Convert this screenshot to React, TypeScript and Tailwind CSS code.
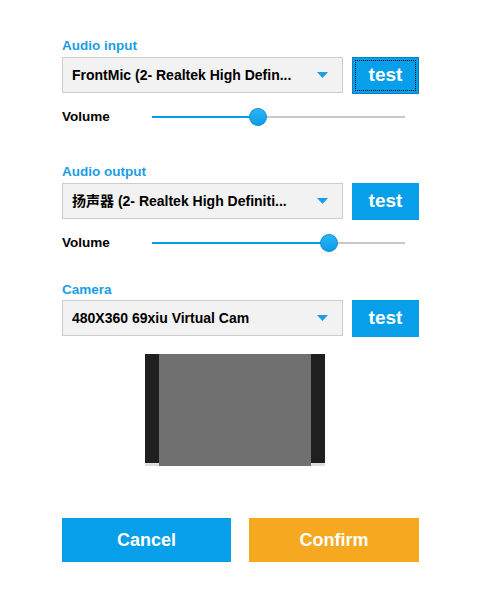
import React from "react";

const font = { fontFamily: '"Liberation Sans", Arial, "Noto Sans CJK SC", sans-serif' };

function Select({ value }: { value: string }) {
  return (
    <div className="flex h-[36px] w-[281px] items-center justify-between border border-[#cccccc] bg-[#f2f2f2] pl-[9px] pr-[14px]">
      <span className="truncate text-[14px] font-bold text-black">{value}</span>
      <svg width="11" height="6" viewBox="0 0 11 6" className="shrink-0">
        <polygon points="0,0 11,0 5.5,6" fill="#1d9ee6" />
      </svg>
    </div>
  );
}

function TestButton({ focused }: { focused?: boolean }) {
  return (
    <button
      className={
        focused
          ? "relative flex h-[37px] w-[67px] items-center justify-center border border-[#0c7fc4] bg-[#079fe9] text-[19px] font-bold text-white"
          : "flex h-[37px] w-[67px] items-center justify-center bg-[#079fe9] text-[19px] font-bold text-white"
      }
    >
      {focused && (
        <span className="absolute inset-[2px] border border-dotted border-black" />
      )}
      <span className="relative">test</span>
    </button>
  );
}

function Volume({ value }: { value: number }) {
  return (
    <div className="flex h-[18px] items-center">
      <span className="w-[90px] text-[13.5px] font-bold text-black">Volume</span>
      <div className="relative h-[18px] w-[253px]">
        <div className="absolute left-0 right-0 top-[8px] h-[2px] bg-[#c8c8c8]" />
        <div className="absolute left-0 top-[8px] h-[2px] bg-[#079fe9]" style={{ width: `${value * 100}%` }} />
        <div
          className="absolute top-0 h-[18px] w-[18px] -translate-x-1/2 rounded-full border border-[#0b8fd6] bg-gradient-to-b from-[#2bb6f5] to-[#0a9be6]"
          style={{ left: `${value * 100}%` }}
        />
      </div>
    </div>
  );
}

function Label({ children }: { children: React.ReactNode }) {
  return <div className="h-[16px] text-[13.5px] font-bold leading-[16px] text-[#1b9de6]">{children}</div>;
}

export default function App() {
  return (
    <div className="h-[600px] w-[480px] bg-white pl-[62px] pt-[38px]" style={font}>
      <div className="flex w-[357px] flex-col">
        <Label>Audio input</Label>
        <div className="mt-[3px] flex items-start gap-[9px]">
          <Select value="FrontMic (2- Realtek High Defin..." />
          <TestButton focused />
        </div>
        <div className="mt-[14px]">
          <Volume value={0.419} />
        </div>

        <div className="mt-[38px]">
          <Label>Audio output</Label>
        </div>
        <div className="mt-[3px] flex items-start gap-[9px]">
          <Select value="扬声器 (2- Realtek High Definiti..." />
          <TestButton />
        </div>
        <div className="mt-[14px]">
          <Volume value={0.7} />
        </div>

        <div className="mt-[30px]">
          <Label>Camera</Label>
        </div>
        <div className="mt-[2px] flex items-start gap-[9px]">
          <Select value="480X360 69xiu Virtual Cam" />
          <TestButton />
        </div>

        <div className="ml-[83px] mt-[17px] flex h-[112px] w-[180px] flex-col">
          <div className="flex flex-1">
            <div className="w-[14px] bg-[#1f1f1f]" />
            <div className="flex-1 bg-[#707070]" />
            <div className="w-[14px] bg-[#1f1f1f]" />
          </div>
          <div className="flex h-[3px]">
            <div className="w-[14px] bg-[#dcdcdc]" />
            <div className="flex-1 bg-[#707070]" />
            <div className="w-[14px] bg-[#dcdcdc]" />
          </div>
        </div>

        <div className="mt-[52px] flex gap-[18px]">
          <button className="flex h-[44px] w-[169px] items-center justify-center bg-[#079fe9] text-[18px] font-bold text-white">
            Cancel
          </button>
          <button className="flex h-[44px] w-[170px] items-center justify-center bg-[#f6a821] text-[18px] font-bold text-white">
            Confirm
          </button>
        </div>
      </div>
    </div>
  );
}
